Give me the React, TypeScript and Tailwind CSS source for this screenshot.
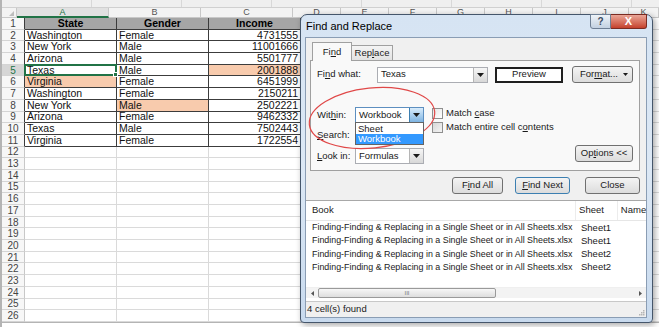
import React from 'react';

const cols = [92, 92, 92, 48, 48, 48, 48, 48, 48, 48, 30];
const letters = ['A', 'B', 'C', 'D', 'E', 'F', 'G', 'H', 'I', 'J', 'K'];

const data: [string, string, string][] = [
    ['State', 'Gender', 'Income'],
    ['Washington', 'Female', '4731555'],
    ['New York', 'Male', '11001666'],
    ['Arizona', 'Male', '5501777'],
    ['Texas', 'Male', '2001888'],
    ['Virginia', 'Female', '6451999'],
    ['Washington', 'Female', '2150211'],
    ['New York', 'Male', '2502221'],
    ['Arizona', 'Female', '9462332'],
    ['Texas', 'Male', '7502443'],
    ['Virginia', 'Female', '1722554'],
];

// cells with the orange fill, as "row-col"
const orange = ['5-2', '6-0', '8-1'];

const files = [
    ['Finding-Finding & Replacing in a Single Sheet or in All Sheets.xlsx', 'Sheet1'],
    ['Finding-Finding & Replacing in a Single Sheet or in All Sheets.xlsx', 'Sheet1'],
    ['Finding-Finding & Replacing in a Single Sheet or in All Sheets.xlsx', 'Sheet2'],
    ['Finding-Finding & Replacing in a Single Sheet or in All Sheets.xlsx', 'Sheet2'],
];

function Arrow({ blue }: { blue?: boolean }) {
    return (
        <div
            className={
                blue
                    ? 'w-[14px] h-full flex items-center justify-center border-l border-[#3c7fb1] bg-gradient-to-b from-[#d9ecfb] to-[#7eb4e2]'
                    : 'w-[14px] h-full flex items-center justify-center border-l border-[#b5b5b5] bg-gradient-to-b from-[#f6f6f6] to-[#d8d8d8]'
            }
        >
            <svg width="7" height="4" viewBox="0 0 7 4">
                <path d="M0 0h7L3.5 4z" fill="#1a1a1a" />
            </svg>
        </div>
    );
}

function Btn({ children, wide, primary }: { children: React.ReactNode; wide: string; primary?: boolean }) {
    return (
        <div
            className={`${wide} h-[17px] flex items-center justify-center rounded-[3px] border ${
                primary ? 'border-[#3c7fb1]' : 'border-[#707070]'
            } bg-gradient-to-b from-[#f4f4f4] to-[#dcdcdc] text-[#1a1a1a]`}
        >
            {children}
        </div>
    );
}

function Sheet() {
    return (
        <div className="flex flex-col border-l-2 border-[#b4b4b4] h-full">
            {/* formula bar remnant */}
            <div className="h-[8px] bg-[#efefef] border-b border-[#d0d0d0] flex">
                {[60, 150, 240, 330, 420, 510, 600].map((x) => (
                    <div key={x} className="w-[90px] h-full border-r border-[#d8d8d8]" />
                ))}
            </div>
            {/* column letters */}
            <div className="flex h-[10px] bg-[#f3f3f3] text-[9px] leading-[9px] text-[#555]">
                <div className="w-[23px] border-r border-b border-[#c8c8c8] flex items-end justify-end pr-[2px] pb-[1px]">
                    <svg width="5" height="5" viewBox="0 0 5 5">
                        <path d="M5 0v5H0z" fill="#bdbdbd" />
                    </svg>
                </div>
                {cols.map((w, i) => (
                    <div
                        key={i}
                        style={{ width: w }}
                        className={
                            i === 0
                                ? 'shrink-0 flex items-center justify-center border-r border-[#c8c8c8] border-b-2 border-b-[#217346] bg-[#e1e1e1] text-[#217346]'
                                : 'shrink-0 flex items-center justify-center border-r border-b border-[#c8c8c8]'
                        }
                    >
                        {letters[i]}
                    </div>
                ))}
            </div>
            {Array.from({ length: 26 }, (_, r) => {
                const row = r + 1;
                const vals = data[r];
                return (
                    <div key={row} className="flex h-[11.7px] text-[10.5px] leading-[11px]">
                        <div
                            className={`w-[23px] shrink-0 flex items-center justify-center text-[10px] border-b border-[#d4d4d4] ${
                                row <= 11 ? 'border-r border-r-[#3c3c3c]' : 'border-r border-r-[#c8c8c8]'
                            } ${row === 5 ? 'bg-[#d6d6d6] text-[#217346]' : 'bg-[#f7f7f7] text-[#444]'}`}
                        >
                            {row}
                        </div>
                        {cols.map((w, c) => {
                            const isData = !!vals && c < 3;
                            const isHead = row === 1 && c < 3;
                            const isOrange = orange.includes(`${row}-${c}`);
                            const selected = row === 5 && c === 0;
                            return (
                                <div
                                    key={c}
                                    style={{ width: w }}
                                    className={`relative shrink-0 px-[2px] flex items-center whitespace-nowrap overflow-visible ${
                                        isData ? 'border-r border-b border-[#3c3c3c]' : 'border-r border-b border-[#dadada]'
                                    } ${isHead ? 'bg-[#a6a6a6] font-bold justify-center text-black' : ''} ${
                                        isOrange ? 'bg-[#f8cbad]' : ''
                                    } ${isData && !isHead && c === 2 ? 'justify-end' : ''} text-[#111]`}
                                >
                                    {isData ? vals[c] : ''}
                                    {selected && (
                                        <div className="absolute -inset-[1px] border-2 border-[#217346] z-10">
                                            <div className="absolute -right-[3px] -bottom-[3px] w-[5px] h-[5px] bg-[#217346] border border-white" />
                                        </div>
                                    )}
                                </div>
                            );
                        })}
                    </div>
                );
            })}
            <div className="flex-1 border-t border-[#b4b4b4] bg-white" />
        </div>
    );
}

function Dialog() {
    return (
        <div className="absolute left-[300px] top-[14px] w-[353px] h-[309px] rounded-t-[7px] rounded-b-[4px] border border-[#45566b] bg-gradient-to-b from-[#d6e4f3] via-[#dce8f5] to-[#c8daee] flex flex-col shadow-[2px_2px_6px_rgba(0,0,0,0.35)] font-['Liberation_Sans',sans-serif] text-[9.5px] text-[#1a1a1a]">
            {/* title bar */}
            <div className="h-[22px] flex items-start justify-between pl-[5px]">
                <div className="pt-[6px] text-[11px] leading-[11px] text-black">Find and Replace</div>
                <div className="flex mr-[5px] -mt-px">
                    <div className="w-[21px] h-[15px] flex items-center justify-center rounded-bl-[3px] border border-[#6e7f94] bg-gradient-to-b from-[#eef3f8] to-[#c3d1e1] text-[10px] font-bold text-[#3b4b60]">
                        ?
                    </div>
                    <div className="w-[36px] h-[15px] flex items-center justify-center rounded-br-[3px] border border-l-0 border-[#7a2b22] bg-gradient-to-b from-[#e9a597] to-[#c4402c] text-white text-[11px] font-bold leading-none">
                        X
                    </div>
                </div>
            </div>
            {/* client area */}
            <div className="ml-[4px] w-[342px] h-[281px] bg-[#f0f0f0] border border-[#8a9db4] flex flex-col">
                {/* tabs */}
                <div className="flex items-end h-[22px] pl-[6px]">
                    <div className="relative z-10 w-[40px] h-[19px] -mb-px bg-[#f9f9f9] border border-b-0 border-[#a0a0a0] flex items-center justify-center">
                        Fi<span className="underline">n</span>d
                    </div>
                    <div className="w-[41px] h-[15px] bg-gradient-to-b from-[#f4f4f4] to-[#e3e3e3] border border-l-0 border-b-0 border-[#a0a0a0] flex items-center justify-center">
                        Rep<span className="underline">l</span>ace
                    </div>
                </div>
                {/* tab panel */}
                <div className="ml-[4px] w-[330px] h-[111px] bg-[#f9f9f9] border border-[#a0a0a0] flex flex-col">
                    <div className="flex items-center mt-[5px] pl-[6px] h-[17px]">
                        <div className="w-[60px]">
                            Fi<span className="underline">n</span>d what:
                        </div>
                        <div className="w-[111px] h-[16px] bg-white border border-[#abadb3] flex items-center justify-between pl-[3px]">
                            <span>Texas</span>
                            <Arrow />
                        </div>
                        <div className="ml-[7px] w-[68px] h-[16px] border-2 border-[#1f1f1f] bg-white flex items-center justify-center">
                            Preview
                        </div>
                        <div className="ml-[9px] w-[61px] h-[17px] rounded-[3px] border border-[#707070] bg-gradient-to-b from-[#f4f4f4] to-[#dcdcdc] flex items-center justify-between pl-[7px] pr-[4px]">
                            <span>
                                For<span className="underline">m</span>at...
                            </span>
                            <svg width="5" height="3" viewBox="0 0 5 3">
                                <path d="M0 0h5L2.5 3z" fill="#1a1a1a" />
                            </svg>
                        </div>
                    </div>
                    <div className="flex mt-[24px] pl-[6px] pr-[6px]">
                        <div className="relative flex flex-col">
                            <div className="flex items-center h-[16px]">
                                <div className="w-[38px]">
                                    Wit<span className="underline">h</span>in:
                                </div>
                                <div className="w-[69px] h-[16px] bg-white border border-[#5d8fc0] flex items-center justify-between pl-[3px]">
                                    <span>Workbook</span>
                                    <Arrow blue />
                                </div>
                            </div>
                            <div className="flex items-center h-[16px] mt-[4px]">
                                <div className="w-[38px]">
                                    <span className="underline">S</span>earch:
                                </div>
                                <div className="w-[69px] h-[16px] bg-white border border-[#abadb3]" />
                            </div>
                            <div className="flex items-center h-[16px] mt-[5px]">
                                <div className="w-[38px]">
                                    <span className="underline">L</span>ook in:
                                </div>
                                <div className="w-[69px] h-[16px] bg-white border border-[#abadb3] flex items-center justify-between pl-[3px]">
                                    <span>Formulas</span>
                                    <Arrow />
                                </div>
                            </div>
                            {/* open list of the Within box */}
                            <div className="absolute left-[38px] top-[15px] w-[69px] h-[23px] bg-white border border-[#646464] flex flex-col z-10">
                                <div className="h-[11px] leading-[11px] pl-[2px]">Sheet</div>
                                <div className="h-[10px] leading-[10px] pl-[2px] bg-[#3399ff] text-white">Workbook</div>
                            </div>
                        </div>
                        <div className="flex flex-col ml-[8px] pt-[1px] gap-[3px]">
                            <div className="flex items-center h-[11px] gap-[3px]">
                                <div className="w-[11px] h-[11px] border border-[#8f8f8f] bg-gradient-to-br from-[#e6e6e6] to-white" />
                                <span>
                                    Match <span className="underline">c</span>ase
                                </span>
                            </div>
                            <div className="flex items-center h-[11px] gap-[3px]">
                                <div className="w-[11px] h-[11px] border border-[#8f8f8f] bg-gradient-to-br from-[#d8d8d8] to-[#f4f4f4]" />
                                <span>
                                    Match entire cell c<span className="underline">o</span>ntents
                                </span>
                            </div>
                        </div>
                        <div className="ml-auto self-end mb-[2px]">
                            <Btn wide="w-[58px]">
                                Op<span className="underline">t</span>ions &lt;&lt;
                            </Btn>
                        </div>
                    </div>
                </div>
                {/* action buttons */}
                <div className="flex justify-end mt-[6px] pr-[6px] h-[17px]">
                    <Btn wide="w-[51px]">
                        F<span className="underline">i</span>nd All
                    </Btn>
                    <div className="ml-[12px]">
                        <Btn wide="w-[55px]" primary>
                            <span className="underline">F</span>ind Next
                        </Btn>
                    </div>
                    <div className="ml-[15px]">
                        <Btn wide="w-[55px]">Close</Btn>
                    </div>
                </div>
                {/* results */}
                <div className="mt-[6px] h-[101px] bg-white border-t border-[#a8a8a8] flex flex-col">
                    <div className="h-[20px] flex items-center border-b border-[#e6e6e6] text-[#222]">
                        <div className="w-[272px] pl-[6px] h-full flex items-center border-r border-[#ececec]">Book</div>
                        <div className="w-[42px] pl-[3px] h-full flex items-center border-r border-[#ececec]">Sheet</div>
                        <div className="pl-[3px] whitespace-nowrap overflow-hidden">Name</div>
                    </div>
                    {files.map(([book, sheet], i) => (
                        <div key={i} className="h-[13.3px] flex items-center whitespace-nowrap text-[8.9px]">
                            <div className="w-[272px] pl-[6px] overflow-hidden">{book}</div>
                            <div className="pl-[3px] text-[9.5px]">{sheet}</div>
                        </div>
                    ))}
                    <div className="mt-auto mb-[3px] h-[11px] flex items-center border-t border-[#efefef] bg-[#f3f3f3]">
                        <div className="w-[12px] flex justify-center">
                            <svg width="3" height="5" viewBox="0 0 3 5">
                                <path d="M3 0v5L0 2.5z" fill="#555" />
                            </svg>
                        </div>
                        <div className="w-[178px] h-[10px] rounded-[2px] border border-[#9a9a9a] bg-gradient-to-b from-[#f7f7f7] to-[#dedede] flex items-center justify-center text-[6px] leading-none text-[#777]">
                            III
                        </div>
                        <div className="ml-auto w-[12px] flex justify-center">
                            <svg width="3" height="5" viewBox="0 0 3 5">
                                <path d="M0 0v5L3 2.5z" fill="#555" />
                            </svg>
                        </div>
                    </div>
                </div>
                {/* status bar */}
                <div className="flex-1 flex items-center justify-between border-t border-[#c8c8c8] pl-[1px] pr-[1px]">
                    <span>4 cell(s) found</span>
                    <svg width="8" height="8" viewBox="0 0 8 8" className="self-end mb-[1px]">
                        <g fill="#b5b5b5">
                            <rect x="6" y="2" width="1.5" height="1.5" />
                            <rect x="4" y="4" width="1.5" height="1.5" />
                            <rect x="6" y="4" width="1.5" height="1.5" />
                            <rect x="2" y="6" width="1.5" height="1.5" />
                            <rect x="4" y="6" width="1.5" height="1.5" />
                            <rect x="6" y="6" width="1.5" height="1.5" />
                        </g>
                    </svg>
                </div>
            </div>
        </div>
    );
}

export default function App() {
    return (
        <div className="relative w-[659px] h-[327px] overflow-hidden bg-white font-['Liberation_Sans',sans-serif]">
            <Sheet />
            <Dialog />
            {/* red annotation ring */}
            <svg className="absolute left-0 top-0 pointer-events-none" width="659" height="327">
                <ellipse cx="372" cy="118" rx="63" ry="30" fill="none" stroke="#e04848" strokeWidth="1.2" transform="rotate(-6 372 118)" />
            </svg>
        </div>
    );
}
